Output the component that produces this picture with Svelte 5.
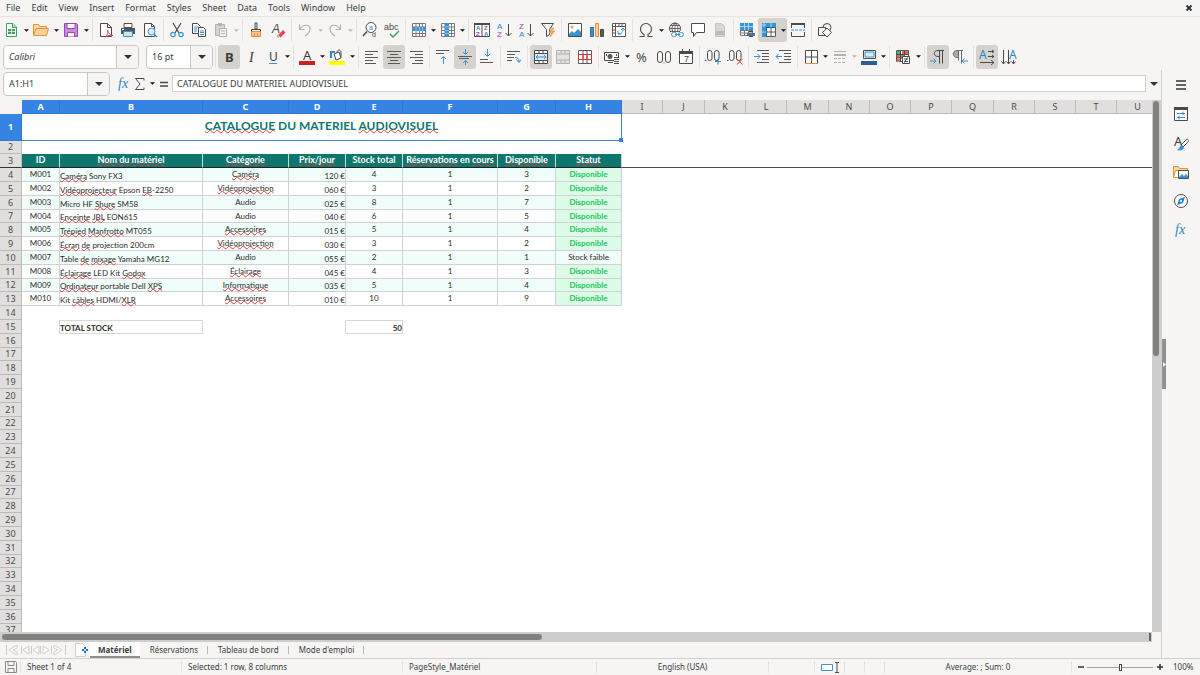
<script lang="ts">
    type Tool = { icon: string; label: string; caret?: boolean; active?: boolean; off?: boolean };
    type Group = { compact?: boolean; tools: Tool[] };

    const menus = ["File", "Edit", "View", "Insert", "Format", "Styles", "Sheet", "Data", "Tools", "Window", "Help"];

    const k = 'fill="none" stroke="#4a4a4a"';
    const g = 'fill="none" stroke="#b4b2b0"';
    const b = 'fill="none" stroke="#3a93d4"';
    const letter = 'font-family="Noto Sans, sans-serif"';
    const small = 'font-family="Liberation Sans, sans-serif"';
    const hLines = (col: string, rows: [number, number, number][]) =>
        rows.map(([y, x1, x2]) => `<path d="M${x1} ${y}.5H${x2}" fill="none" stroke="${col}"/>`).join("");
    const tableGrid = '<path d="M1.500 1.500h13v13h-13zM1.500 5h13M1.500 8.500h13M1.500 11.500h13M5 1.500v13M8.500 1.500v13M11.500 1.500v13"';

    const icons: Record<string, string> = {
        new: `<path d="M3.500 1.500h6.500l3.500 3.500v9.500h-10z" fill="#fff" stroke="#3ba35a"/><path d="M9.500 1.500v4h4" fill="#b7e0c2" stroke="#3ba35a"/><path d="M5 7h7v5H5z" fill="#3ba35a"/><path d="M5 9.500h7M8.500 7v5" stroke="#fff" stroke-width=".7"/>`,
        open: `<path d="M.500 13.500v-11h5l1.500 2h6.500v2" fill="#fbd9a0" stroke="#e69138"/><path d="M.500 13.500L3 6.500h12.500l-2 7z" fill="#fbd39a" stroke="#e69138"/>`,
        save: `<path d="M1.500 1.500h12l1 1v12h-13z" fill="#c98ad8" stroke="#9a45b3"/><path d="M4 1.500h8v5H4z" fill="#fff" stroke="#9a45b3"/><path d="M4.500 14.500v-4h7v4" fill="#fff" stroke="#9a45b3"/>`,
        pdf: `<path d="M2.500 1.500h7l4 4v9h-11z" fill="#fff" stroke="#4a4a4a"/><path d="M9.500 1.500v4h4" ${k}/><path d="M7 15c3-2 3-5 2.500-7 1 4 3 5 5.500 5.500-3-.5-5 0-8 1.500z" fill="none" stroke="#df4358"/>`,
        print: `<path d="M4 1.500h8v4H4z" fill="#fff" stroke="#4a4a4a"/><path d="M1 6h14v6H1z" fill="#555"/><path d="M3.500 9.500h9v5h-9z" fill="#cfe6f7" stroke="#3a93d4"/><path d="M2 7.500h2" stroke="#fff"/>`,
        preview: `<path d="M2.500 1.500h7l3 3v10h-10z" fill="#fff" stroke="#4a4a4a"/><path d="M9.500 1.500v3h3" ${k}/><circle cx="9.500" cy="9.500" r="3.500" fill="#d8ecfa" stroke="#3a93d4"/><path d="M12 12l3 3" stroke="#3a93d4" stroke-width="1.500"/>`,
        cut: `<path d="M4 1l6 10M12 1L6 11" ${k} stroke-width="1.200"/><circle cx="4" cy="12.500" r="2.200" ${b} stroke-width="1.200"/><circle cx="12" cy="12.500" r="2.200" ${b} stroke-width="1.200"/>`,
        copy: `<path d="M1.500 1.500h5l3 3v7h-8z" fill="#fff" stroke="#4a4a4a"/><path d="M3 5h4M3 7h3M3 9h3" ${b}/><path d="M7.500 5.500h5l2 2v7h-7z" fill="#fff" stroke="#4a4a4a"/><path d="M9 9h4M9 10.500h4M9 12.500h4" ${b}/>`,
        paste: `<path d="M2.500 2.500h9v11h-9z" fill="#d5d3d1" stroke="#b4b2b0"/><path d="M5 1h4v3H5z" fill="#b4b2b0"/><path d="M6.500 6.500h7v8h-7z" fill="#f3f2f1" stroke="#b4b2b0"/><path d="M8 9h4M8 11.500h4" ${g}/>`,
        clone: `<path d="M7 1h2v6H7z" fill="#eee" stroke="#4a4a4a"/><path d="M3.500 7.500h9v2h-9z" fill="#fff" stroke="#4a4a4a"/><path d="M3.500 9.500h9v5h-9z" fill="#f7c98b" stroke="#e69138"/><path d="M6.500 11v3M9.500 11v3" stroke="#e69138"/>`,
        clear: `<text x="2" y="11" font-size="12" font-style="italic" ${small} fill="#4a4a4a">A</text><path d="M8 13l5-5 2.500 2.500-5 5z" fill="#e5485d"/><path d="M7 13.500l2 2" stroke="#f5a5b0" stroke-width="2"/>`,
        undo: `<path d="M2.500 2.500v5h5M3 7c3-5 10-5 10 0 0 3-2 5-5 7" ${g} stroke-width="1.200"/>`,
        redo: `<path d="M13.500 2.500v5h-5M13 7C10 2 3 2 3 7c0 3 2 5 5 7" ${g} stroke-width="1.200"/>`,
        find: `<circle cx="9" cy="5.500" r="5" fill="#fff" stroke="#4a4a4a"/><path d="M5 9.500L1 14" ${k} stroke-width="1.500"/><text x="7" y="8" font-size="7" ${small} fill="#2b86cc">a</text><text x="10" y="15" font-size="7" ${small} fill="#4a4a4a">d</text>`,
        spell: `<text x="0" y="8" font-size="9" ${small} fill="#4a4a4a">abc</text><path d="M6 12l3 3 6-6" fill="none" stroke="#35a15c" stroke-width="1.400"/>`,
        row: `${tableGrid} fill="#fff" stroke="#777"/><path d="M1 5h14v4H1z" fill="#3a93d4"/><path d="M5 5v4M8.500 5v4M11.500 5v4" stroke="#8cc4ec"/>`,
        col: `${tableGrid} fill="#fff" stroke="#777"/><path d="M5 1h4v14H5z" fill="#3a93d4"/><path d="M5 5h4M5 8.500h4M5 11.500h4" stroke="#8cc4ec"/>`,
        sort: `<path d="M.500 1.500h15v13H.500zM8 2v12" fill="#fff" stroke="#4a4a4a"/><path d="M0 1h16v2H0z" fill="#4a4a4a"/><g font-size="6" font-weight="700" ${small}><text x="2" y="8" fill="#2b86cc">A</text><text x="2" y="14" fill="#a33bb5">Z</text><text x="10" y="8" fill="#a33bb5">Z</text><text x="10" y="14" fill="#2b86cc">A</text></g>`,
        asc: `<g font-size="8" ${small}><text x="1" y="7" fill="#2b86cc">A</text><text x="1" y="15" fill="#a33bb5">Z</text></g><path d="M12.500 2v12M9.500 11l3 3 3-3" ${k}/>`,
        desc: `<g font-size="8" ${small}><text x="1" y="7" fill="#a33bb5">Z</text><text x="1" y="15" fill="#2b86cc">A</text></g><path d="M12.500 2v12M9.500 11l3 3 3-3" ${k}/>`,
        filter: `<path d="M1.500 1.500h12l-4 6v5l-3 2v-7z" fill="#fff" stroke="#4a4a4a"/><path d="M12 6l-3 5h2.500L10 15l5-6h-3l2-3z" fill="#f3a947" stroke="#e69138" stroke-width=".5"/>`,
        image: `<path d="M1.500 1.500h13v13h-13z" fill="#fff" stroke="#4a4a4a"/><path d="M2 14v-2l3-3 2 2 4-4 3 3v4z" fill="#3a93d4"/><circle cx="5" cy="5" r="1.500" fill="#f3a947"/>`,
        chart: `<path d="M1.500 5.500h3v9h-3z" fill="#3a93d4" stroke="#2b6fae"/><path d="M6.500 1.500h3v13h-3z" fill="#fbd39a" stroke="#e69138"/><path d="M11.500 7.500h3v7h-3z" fill="#5a5a5a" stroke="#4a4a4a"/>`,
        pivot: `<path d="M1.500 1.500h13v13h-13zM1.500 4.500h13M4.500 1.500v13M8 1.500v3M11 1.500v3M1.500 8h3M1.500 11h3" fill="#fff" stroke="#5a5a5a"/><path d="M7 9v3h3M7 12c4 0 5-2 5-5M10 8l2-2 2 2" ${b}/>`,
        omega: `<path d="M1.500 14.500H6v-2C3.500 11 2.500 9 2.500 7a5.500 5.500 0 0 1 11 0c0 2-1 4-3.500 5.500v2h4.500" ${k} stroke-width="1.100"/>`,
        link: `<circle cx="7" cy="6.500" r="5.500" fill="#fff" stroke="#4a4a4a"/><path d="M1.500 6.500h11M7 1v11M7 1c-4 3-4 8 0 11M7 1c4 3 4 8 0 11M2.500 3.500h9M2.500 9.500h9" ${k} stroke-width=".8"/><path d="M3 10h13v5H3z" fill="#f6f5f4"/><rect x="3.500" y="10.500" width="5" height="4" rx="2" ${b}/><rect x="10.500" y="10.500" width="5" height="4" rx="2" ${b}/><path d="M7 12.500h5" ${b}/>`,
        comment: `<path d="M1.500 1.500h13v9h-8l-3 4v-4h-2z" fill="#fff" stroke="#4a4a4a"/>`,
        page: `<path d="M3.500 1.500h6l3 3v10h-9z" fill="#d9d7d5" stroke="#c4c2c0"/><path d="M4 9h8v4H4z" fill="#bdbbb9"/>`,
        header: `<path d="M1.500 1.500h12v12h-12zM1.500 8.500h12M5.500 8v5M9.500 8v5M1.500 11h12" fill="#fff" stroke="#777"/><path d="M1 1h13v7H1z" fill="#3a93d4"/><path d="M1 4.500h13M5.500 1v7M9.500 1v7" stroke="#a9d3f2"/><path d="M8 11h8v3H8z" fill="#5a6f86"/><path d="M10 9.500h4M10 14.500h4" stroke="#4a4a4a"/>`,
        freeze: `<path d="M1.500 1.500h13v13h-13zM10 1.500v13M1.500 10h13" fill="#fff" stroke="#5a5a5a"/><path d="M1 1h14v4H1zM1 1h4v14H1z" fill="#3a93d4"/><path d="M5.500 5v10M5 5.500h10" stroke="#2369a6"/><path d="M1 10h4M10 1v4M1 3h4M3 1v4" stroke="#a9d3f2"/>`,
        split: `<path d="M1.500 6V1.500h13V6M1.500 10v4.500h13V10" fill="none" stroke="#4a4a4a"/><path d="M1 1h14v2H1z" fill="#4a4a4a"/><path d="M1 8h14" stroke="#3a93d4" stroke-dasharray="3 1"/>`,
        shapes: `<circle cx="10" cy="5.500" r="4" ${k}/><path d="M1.500 5.500h7v8h-7z" fill="#f6f5f4" stroke="#4a4a4a"/><path d="M10 6l4.500 4.500L10 15 5.500 10.500z" fill="#f6f5f4" stroke="#4a4a4a"/>`,
        bold: `<text x="4" y="13" font-size="13" font-weight="700" ${letter} fill="#3a3a3a">B</text>`,
        italic: `<text x="6" y="13" font-size="14" font-style="italic" font-family="Liberation Serif, serif" fill="#3a3a3a">I</text>`,
        underline: `<text x="4" y="12" font-size="12" ${letter} fill="#3a3a3a">U</text><path d="M4 14.500h8" ${b}/>`,
        color: `<text x="4" y="11" font-size="13" ${letter} fill="#3a3a3a">A</text><path d="M0 12h16v4H0z" fill="#c9211e"/>`,
        highlight: `<path d="M0 12h16v4H0z" fill="#ffff00"/><path d="M5 5l5-2 2 6-5 2z" fill="#fff" stroke="#4a4a4a"/><path d="M8 4c0-4 4-4 4 0v4" ${k}/><path d="M2 9V3h4" fill="none" stroke="#2b86cc" stroke-width="2"/>`,
        left: hLines("#5a5a5a", [[2, 1, 14], [5, 1, 9], [8, 1, 14], [11, 1, 9], [14, 1, 12]]),
        center: hLines("#5a5a5a", [[2, 1, 15], [5, 4, 12], [8, 1, 15], [11, 4, 12], [14, 2, 14]]),
        right: hLines("#5a5a5a", [[2, 2, 15], [5, 7, 15], [8, 2, 15], [11, 7, 15], [14, 4, 15]]),
        top: hLines("#5a5a5a", [[1, 1, 14], [4, 1, 9]]) + `<path d="M8.500 15V8M6 10l2.500-2.500L11 10" ${b}/>`,
        middle: hLines("#5a5a5a", [[7, 1, 15], [9, 2, 12]]) + `<path d="M8.500 0v5M6 3l2.500 2.500L11 3M8.500 16v-5M6 14l2.500-2.500L11 14" ${b}/>`,
        bottom: hLines("#5a5a5a", [[10, 1, 9], [13, 1, 14]]) + `<path d="M8.500 0v7M6 5l2.500 2.500L11 5" ${b}/>`,
        wrap: hLines("#5a5a5a", [[2, 1, 14], [5, 1, 9], [8, 1, 8], [11, 1, 6]]) + `<path d="M9 8.500c3 0 4 1 4 4M10.500 10.500l2.500 3 2-3" ${b}/>`,
        merge: `<path d="M1.500 1.500h13v13h-13zM1.500 4.500h13M1.500 11.500h13M6 1.500v3M10 1.500v3M6 11.500v3M10 11.500v3" fill="#fff" stroke="#4a4a4a"/><path d="M2 5h12v6H2z" fill="#d8ecfa"/><path d="M3 8h10M5 6L3 8l2 2M11 6l2 2-2 2" ${b}/>`,
        mergeCells: `<path d="M1.500 1.500h13v13h-13zM1.500 5h13M1.500 11h13M6 1.500V5M10 1.500V5M6 11v3.500M10 11v3.500" fill="#e5e3e1" stroke="#b4b2b0"/>`,
        unmerge: `<path d="M1.500 1.500h13v13h-13zM6 1.500v13M10 1.500v13" fill="#fff" stroke="#5a5a5a"/><path d="M1.500 5.500h13v5h-13zM6 5.500v5M10 5.500v5" fill="none" stroke="#d33"/>`,
        currency: `<path d="M.500 3.500h14v8H.500z" fill="#fff" stroke="#4a4a4a"/><circle cx="6" cy="7.500" r="2.500" fill="#5a5a5a"/><path d="M2.500 5v2M12.500 5v2" stroke="#4a4a4a"/><path d="M4 11h5v4H4zM10 8h5v7h-5z" fill="#f6f5f4"/><path d="M4 11.500h5M4 13.500h5M10 8.500h5M10 10.500h5M10 12.500h5M10 14.500h5" ${k}/>`,
        percent: `<text x="2" y="13" font-size="13" ${letter} fill="#4a4a4a">%</text>`,
        number: `<g ${k}><rect x="1.500" y="2.500" width="5" height="11" rx="2.500"/><rect x="9.500" y="2.500" width="5" height="11" rx="2.500"/></g><path d="M7.500 14h1" stroke="#4a4a4a"/>`,
        date: `<path d="M1.500 2.500h13v12h-13z" fill="#fff" stroke="#4a4a4a"/><path d="M1 2h14v3H1zM4 0h1v2H4zM11 0h1v2h-1z" fill="#4a4a4a"/><text x="6" y="13" font-size="9" ${small} fill="#3a3a3a">7</text>`,
        addDec: `<path d="M0 11.500h1.500" stroke="#4a4a4a"/><g ${k}><rect x="2.500" y="1.500" width="4.500" height="10" rx="2.200"/><rect x="9.500" y="1.500" width="4.500" height="10" rx="2.200"/></g><path d="M10 12.500h6M13 9.500v6" stroke="#2b86cc"/>`,
        delDec: `<path d="M0 11.500h1.500" stroke="#4a4a4a"/><g ${k}><rect x="2.500" y="1.500" width="4.500" height="10" rx="2.200"/><rect x="9.500" y="1.500" width="4.500" height="10" rx="2.200"/></g><path d="M10 10l5.500 5.500M15.500 10L10 15.500" stroke="#e03a3a"/>`,
        indent: hLines("#5a5a5a", [[1, 3, 15], [4, 8, 15], [7, 8, 15], [10, 8, 15], [13, 3, 15]]) + `<path d="M0 7.500h6M3.500 5L6 7.500 3.500 10" ${b}/>`,
        outdent: hLines("#5a5a5a", [[1, 3, 15], [4, 8, 15], [7, 8, 15], [10, 8, 15], [13, 3, 15]]) + `<path d="M0 7.500h6M2.500 5L0 7.500 2.500 10" ${b}/>`,
        borders: `<path d="M2.500 14V1.500h12V14M8.500 1.500V14M2.500 8h12" fill="#fff" stroke="#4a4a4a"/><path d="M2 14.500h13" stroke="#e69138"/>`,
        lines: `<path d="M2 2.500h12" ${g}/><path d="M2 6h12" ${g} stroke-width="2"/><path d="M2 9.500h12M2 13.500h12" ${g} stroke-dasharray="3 1"/>`,
        lineColor: `<path d="M2.500 1.500h12v8h-12z" fill="#fff" stroke="#4a4a4a"/><path d="M4 3h9v5H4z" fill="#d8ecfa" stroke="#3a93d4"/><path d="M0 12h16v4H0z" fill="#2a6099"/>`,
        cond: `<path d="M1.500 1.500h12v11h-12z" fill="#fff" stroke="#5a5a5a"/><path d="M2 2h4v3H2zM6 6h4v3H6z" fill="#4cb06c"/><path d="M7 2h6v3H7zM2 6h3v3H2zM2 10h3v3H2z" fill="#e5655f"/><path d="M1.500 5.500h12M1.500 9h12M5.500 1.500v11M9.500 1.500v5" ${k}/><path d="M7.500 7.500h7v7h-7z" fill="#fff" stroke="#4a4a4a"/><path d="M9 10h4M9 12.500h4M12.500 8.500l-3 5" ${k}/>`,
        ltr: `<path d="M14 1.500H8c-5 0-5 6 0 6h1M9.500 1.500v13M12.500 1.500v13" ${k}/><path d="M0 12h6M3.500 9.500L6 12l-2.500 2.500" ${b}/>`,
        rtl: `<path d="M6.500 1.500H5c-5 0-5 7 0 7h1.500z" fill="#aaa" stroke="#777"/><path d="M6 1.500h5M6.500 1.500v10M9.500 1.500v13" fill="none" stroke="#666"/><path d="M10 12h6M12.500 9.500L10 12l2.500 2.500" ${b}/>`,
        dirH: `<text x="0" y="10" font-size="12" ${letter} fill="#2b86cc">A</text><path d="M9 2.500h6M13 1l2 1.500L13 4M9 7.500h6M13 6l2 1.500L13 9M1 13.500h14M12 11l3 2.500L12 16" ${k}/>`,
        dirV: `<path d="M2.500 1v14M.500 12.500l2 2.500 2-2.500M7.500 1v14M5.500 12.500l2 2.500 2-2.500M12.500 11v4M10.500 12.500l2 2.500 2-2.500" ${k}/><text x="8" y="10" font-size="12" ${letter} fill="#2b86cc">A</text>`,
        props: `<path d="M1.500 1.500h13v13h-13z" fill="#fff" stroke="#4a4a4a"/><path d="M1 1h14v3H1z" fill="#4a4a4a"/><path d="M4 7.500h8M4 11.500h8M10 5.500v3.500M6 9.500v4" ${b}/>`,
        styles: `<text x="1" y="11" font-size="13" ${letter} fill="#3a3a3a">A</text><path d="M14 4c2 1 2 2 0 4l-4 4-2-2z" fill="#fff" stroke="#4a4a4a"/><path d="M4 15c3 1 7 0 7-3l-2-2c-3 1-2 4-5 5z" fill="#3a93d4"/>`,
        gallery: `<path d="M.500 13.500v-11h5l1 2h8v3" fill="#fbd9a0" stroke="#e69138"/><path d="M.500 13.500l2-7h4v7z" fill="#fff" stroke="#e69138"/><path d="M5.500 6.500h10v8h-10z" fill="#fff" stroke="#4a4a4a"/><path d="M6 14v-1l3-3 2 2 2-2 2 2v2z" fill="#3a93d4"/>`,
        navigator: `<circle cx="8" cy="8" r="6.500" fill="#fff" stroke="#4a4a4a"/><path d="M12 4l-2 6-6 2 2-6z" fill="#2b86cc"/><circle cx="8" cy="8" r="1" fill="#fff"/>`,
        fx: `<text x="2" y="12" font-size="14" font-style="italic" font-family="Liberation Serif, serif" fill="#2b86cc">fx</text>`,
        sigma: `<path d="M12 4.500V2.500H3.500L8 8l-4.500 5.500H12v-2" ${k}/>`,
        equals: `<path d="M4 6.500h8M4 10h8" ${k} stroke-width="1.500"/>`,
        menu: `<path d="M3 4h10M3 8h10M3 12h10" stroke="#2e3436" stroke-width="1.500"/>`,
        saved: `<path d="M2.500 2.500h10l1 1v10h-11z" fill="none" stroke="#8a8a8a"/><path d="M5 2.500h6v4H5zM5 13.500v-4h6v4" fill="none" stroke="#8a8a8a"/>`,
        addSheet: `<path d="M1.500 1.500h7l3 3v10h-10z" fill="#fff" stroke="#d0cecc"/><path d="M11 5v6M8 8h6" stroke="#2a6fb5" stroke-width="2"/><circle cx="11" cy="8" r="1" fill="#fff"/>`,
    };

    const standard: Group[] = [
        { tools: [{ icon: "new", label: "New", caret: true }, { icon: "open", label: "Open", caret: true }, { icon: "save", label: "Save", caret: true }] },
        { tools: [{ icon: "pdf", label: "Export as PDF" }, { icon: "print", label: "Print" }, { icon: "preview", label: "Print Preview" }] },
        { tools: [{ icon: "cut", label: "Cut" }, { icon: "copy", label: "Copy" }, { icon: "paste", label: "Paste", caret: true, off: true }] },
        { tools: [{ icon: "clone", label: "Clone Formatting" }, { icon: "clear", label: "Clear Formatting" }] },
        { tools: [{ icon: "undo", label: "Undo", caret: true, off: true }, { icon: "redo", label: "Redo", caret: true, off: true }] },
        { tools: [{ icon: "find", label: "Find and Replace" }, { icon: "spell", label: "Spelling" }] },
        { compact: true, tools: [{ icon: "row", label: "Row", caret: true }, { icon: "col", label: "Column", caret: true }] },
        { tools: [{ icon: "sort", label: "Sort" }, { icon: "asc", label: "Sort Ascending" }, { icon: "desc", label: "Sort Descending" }, { icon: "filter", label: "AutoFilter" }] },
        { tools: [{ icon: "image", label: "Insert Image" }, { icon: "chart", label: "Insert Chart" }, { icon: "pivot", label: "Pivot Table" }] },
        { tools: [{ icon: "omega", label: "Special Character", caret: true }, { icon: "link", label: "Hyperlink" }, { icon: "comment", label: "Comment" }, { icon: "page", label: "Headers and Footers", off: true }] },
        { compact: true, tools: [{ icon: "header", label: "Define Print Area" }, { icon: "freeze", label: "Freeze Panes", caret: true, active: true }, { icon: "split", label: "Split Window" }] },
        { tools: [{ icon: "shapes", label: "Draw Functions" }] },
    ];

    const formatting: Group[] = [
        { compact: true, tools: [{ icon: "bold", label: "Bold", active: true }, { icon: "italic", label: "Italic" }, { icon: "underline", label: "Underline", caret: true }] },
        { tools: [{ icon: "color", label: "Font Color", caret: true }, { icon: "highlight", label: "Highlighting", caret: true }] },
        { tools: [{ icon: "left", label: "Align Left" }, { icon: "center", label: "Center", active: true }, { icon: "right", label: "Align Right" }] },
        { tools: [{ icon: "top", label: "Align Top" }, { icon: "middle", label: "Center Vertically", active: true }, { icon: "bottom", label: "Align Bottom" }] },
        { tools: [{ icon: "wrap", label: "Wrap Text" }] },
        { tools: [{ icon: "merge", label: "Merge and Center", active: true }, { icon: "mergeCells", label: "Merge Cells", off: true }, { icon: "unmerge", label: "Unmerge Cells" }] },
        { tools: [{ icon: "currency", label: "Currency", caret: true }, { icon: "percent", label: "Percent" }, { icon: "number", label: "Number" }, { icon: "date", label: "Date" }] },
        { tools: [{ icon: "addDec", label: "Add Decimal Place" }, { icon: "delDec", label: "Delete Decimal Place" }] },
        { tools: [{ icon: "indent", label: "Increase Indent" }, { icon: "outdent", label: "Decrease Indent" }] },
        { compact: true, tools: [{ icon: "borders", label: "Borders", caret: true }, { icon: "lines", label: "Border Style", caret: true, off: true }, { icon: "lineColor", label: "Border Color", caret: true }] },
        { tools: [{ icon: "cond", label: "Conditional Formatting", caret: true }] },
        { tools: [{ icon: "ltr", label: "Left-To-Right", active: true }, { icon: "rtl", label: "Right-To-Left" }] },
        { tools: [{ icon: "dirH", label: "Horizontal Text", active: true }, { icon: "dirV", label: "Vertical Text" }] },
    ];

    const sidebar = [
        { icon: "menu", label: "Sidebar Settings" },
        { icon: "props", label: "Properties" },
        { icon: "styles", label: "Styles" },
        { icon: "gallery", label: "Gallery" },
        { icon: "navigator", label: "Navigator" },
        { icon: "fx", label: "Functions" },
    ];

    const widths = [38, 143, 86, 57, 57, 95, 58, 66, 41, 42, 41, 41, 42, 41, 41, 41, 42, 41, 41, 41, 42];
    const columns = widths.map((width, i) => ({ name: String.fromCharCode(65 + i), width }));

    // words between underscores are flagged by the spell checker
    const title = "_CATALOGUE_ DU MATERIEL _AUDIOVISUEL_";
    const headings = ["ID", "_Nom du matériel_", "_Catégorie_", "_Prix/jour_", "Stock total", "_Réservations_ en _cours_", "_Disponible_", "_Statut_"];
    const items = [
        ["M001", "_Caméra_ Sony FX3", "_Caméra_", "120 €", "4", "1", "3", "Disponible"],
        ["M002", "_Vidéoprojecteur_ Epson _EB_-2250", "_Vidéoprojection_", "060 €", "3", "1", "2", "Disponible"],
        ["M003", "Micro HF _Shure_ SM58", "Audio", "025 €", "8", "1", "7", "Disponible"],
        ["M004", "_Enceinte_ _JBL_ EON615", "Audio", "040 €", "6", "1", "5", "Disponible"],
        ["M005", "_Trépied_ _Manfrotto_ MT055", "_Accessoires_", "015 €", "5", "1", "4", "Disponible"],
        ["M006", "_Écran_ _de_ projection 200cm", "_Vidéoprojection_", "030 €", "3", "1", "2", "Disponible"],
        ["M007", "Table _de_ _mixage_ Yamaha MG12", "Audio", "055 €", "2", "1", "1", "Stock faible"],
        ["M008", "_Éclairage_ LED Kit _Godox_", "_Éclairage_", "045 €", "4", "1", "3", "Disponible"],
        ["M009", "_Ordinateur_ portable Dell _XPS_", "_Informatique_", "035 €", "5", "1", "4", "Disponible"],
        ["M010", "Kit _câbles_ HDMI/_XLR_", "_Accessoires_", "010 €", "10", "1", "9", "Disponible"],
    ];
    const lastRows = Array.from({ length: 22 }, (_, i) => i + 16);

    let sheets = ["Matériel", "Réservations", "Tableau de bord", "Mode d'emploi"];
    let current = $state("Matériel");
    let formula = $state("CATALOGUE DU MATERIEL AUDIOVISUEL");
    let zoom = $state(100);
</script>

{#snippet icon(name: string)}
    <svg class="icon" viewBox="0 0 16 16" aria-hidden="true">{@html icons[name]}</svg>
{/snippet}

{#snippet arrow()}
    <svg class="arrow" viewBox="0 0 8 4" aria-hidden="true"><path d="M0 0h8L4 4z" fill="currentColor" /></svg>
{/snippet}

{#snippet toolGroups(groups: Group[])}
    {#each groups as group, i}
        {#if i > 0}<span class="sep"></span>{/if}
        <div class="group" class:compact={group.compact}>
            {#each group.tools as tool}
                <span class="tool" class:active={tool.active} class:off={tool.off}>
                    <button class="tool-button" aria-label={tool.label}>{@render icon(tool.icon)}</button>
                    {#if tool.caret}
                        <button class="tool-caret" aria-label={`${tool.label} options`}>{@render arrow()}</button>
                    {/if}
                </span>
            {/each}
        </div>
    {/each}
{/snippet}

{#snippet spelled(text: string)}
    {#each text.split("_") as part, i}{#if i % 2}<span class="typo">{part}</span>{:else}{part}{/if}{/each}
{/snippet}

<div class="app">
    <nav class="menubar">
        {#each menus as menu}
            <button>{menu}</button>
        {/each}
        <button class="close" aria-label="Close document">
            <svg viewBox="0 0 8 8" aria-hidden="true"><path d="M1.500 1.500l5 5M6.500 1.500l-5 5" stroke="#2e3436" stroke-width="1.800" /></svg>
        </button>
    </nav>

    <div class="toolbar">{@render toolGroups(standard)}</div>

    <div class="toolbar">
        <div class="combo font-name">
            <input value="Calibri" aria-label="Font name" />
            <button aria-label="Choose font">{@render arrow()}</button>
        </div>
        <div class="combo font-size">
            <input value="16 pt" aria-label="Font size" />
            <button aria-label="Choose font size">{@render arrow()}</button>
        </div>
        <span class="sep"></span>
        {@render toolGroups(formatting)}
    </div>

    <div class="workspace">
        <main>
            <div class="formula-bar">
                <div class="combo name-box">
                    <input value="A1:H1" aria-label="Name box" />
                    <button aria-label="Choose range">{@render arrow()}</button>
                </div>
                <button class="formula-button" aria-label="Function wizard">{@render icon("fx")}</button>
                <button class="formula-button" aria-label="Select function">{@render icon("sigma")}</button>
                <button class="tool-caret" aria-label="Function list">{@render arrow()}</button>
                <button class="formula-button" aria-label="Formula">{@render icon("equals")}</button>
                <input class="formula" bind:value={formula} aria-label="Input line" />
                <button class="expand" aria-label="Expand formula bar">{@render arrow()}</button>
            </div>

            <div class="sheet-area">
                <div class="sheet">
                    <table>
                        <colgroup>
                            <col style:width="22px" />
                            {#each columns as column}
                                <col style:width={`${column.width}px`} />
                            {/each}
                        </colgroup>
                        <thead>
                            <tr>
                                <td class="corner"></td>
                                {#each columns as column, i}
                                    <th scope="col" class:selected={i < 8}>{column.name}</th>
                                {/each}
                            </tr>
                        </thead>
                        <tbody>
                            <tr class="title-row">
                                <th scope="row" class="selected">1</th>
                                <td class="title" colspan="8">{@render spelled(title)}<span class="handle"></span></td>
                            </tr>
                            <tr><th scope="row">2</th></tr>
                            <tr class="headings">
                                <th scope="row">3</th>
                                {#each headings as heading}
                                    <td>{@render spelled(heading)}</td>
                                {/each}
                                <td class="rest" colspan="13"></td>
                            </tr>
                            {#each items as item, row}
                                <tr class="item" class:even={row % 2 === 0}>
                                    <th scope="row">{row + 4}</th>
                                    {#each item as value, i}
                                        <td class:name={i === 1} class:price={i === 3} class:available={value === "Disponible"}>{@render spelled(value)}</td>
                                    {/each}
                                </tr>
                            {/each}
                            <tr><th scope="row">14</th></tr>
                            <tr class="total">
                                <th scope="row">15</th>
                                <td></td>
                                <td class="boxed">TOTAL STOCK</td>
                                <td></td>
                                <td></td>
                                <td class="boxed sum">50</td>
                            </tr>
                            {#each lastRows as n}
                                <tr><th scope="row">{n}</th></tr>
                            {/each}
                        </tbody>
                    </table>
                </div>
                <div class="vscroll"><div class="thumb"></div></div>
            </div>
            <div class="hscroll"><div class="thumb"></div><span class="grip"></span></div>

            <div class="tabs">
                <button class="sheet-nav" aria-label="Scroll sheets">
                    <svg viewBox="0 0 62 12" aria-hidden="true">
                        <path d="M1.500 1v10M12 1L4 6l8 5V8L8 6l4-2zM24 2l-6 4 6 4zM16.500 2v8M34 2l-6 4 6 4zM26.500 2v8M38 2l6 4-6 4zM35.500 2v8M46.500 2v8M49 1l8 5-8 5V8l4-2-4-2zM60.500 1v10" fill="#fff" stroke="#cfcdcb" />
                    </svg>
                </button>
                <button class="add-sheet" aria-label="Add sheet">{@render icon("addSheet")}</button>
                {#each sheets as sheet}
                    <button class="tab" class:current={sheet === current} onclick={() => (current = sheet)}>{sheet}</button>
                {/each}
            </div>
        </main>

        <aside>
            <button class="collapse" aria-label="Hide sidebar">
                <svg viewBox="0 0 4 6" aria-hidden="true"><path d="M0 0l4 3-4 3z" fill="#fff" /></svg>
            </button>
            {#each sidebar as deck}
                <button class="deck" aria-label={deck.label}>{@render icon(deck.icon)}</button>
            {/each}
        </aside>
    </div>

    <footer>
        <div class="save-state">{@render icon("saved")}</div>
        <div>Sheet 1 of 4</div>
        <div>Selected: 1 row, 8 columns</div>
        <div>PageStyle_Matériel</div>
        <div class="middle">English (USA)</div>
        <div></div>
        <div class="middle mode">
            <svg viewBox="0 0 20 12" aria-hidden="true">
                <path d="M1.500 3.500h11v6h-11z" fill="#fff" stroke="#3a93d4" />
                <path d="M15 1.500h4M15 11.500h4M17 1.500v10" stroke="#4a4a4a" fill="none" />
            </svg>
        </div>
        <div></div>
        <div></div>
        <div class="middle">Average: ; Sum: 0</div>
        <div class="zoom">
            <button aria-label="Zoom out" onclick={() => (zoom -= 5)}><svg viewBox="0 0 8 8" aria-hidden="true"><path d="M1 4h6" stroke="#2e3436" stroke-width="1.500" /></svg></button>
            <input type="range" min="0" max="200" bind:value={zoom} aria-label="Zoom" />
            <button aria-label="Zoom in" onclick={() => (zoom += 5)}><svg viewBox="0 0 8 8" aria-hidden="true"><path d="M1 4h6M4 1v6" stroke="#2e3436" stroke-width="1.500" /></svg></button>
            <span>{zoom}%</span>
        </div>
    </footer>
</div>

<style>
    :global(body) {
        margin: 0;
        overflow: hidden;
    }

    .app {
        display: flex;
        flex-direction: column;
        height: 100vh;
        background: #f6f5f4;
        color: #3a3d3e;
        font: 8px/12px "Noto Sans", sans-serif;
    }

    button,
    input {
        margin: 0;
        padding: 0;
        border: 0;
        background: none;
        color: inherit;
        font: inherit;
    }

    svg {
        display: block;
        overflow: visible;
    }

    .icon {
        width: 16px;
        height: 16px;
        flex: none;
    }

    .arrow {
        width: 5px;
        height: 3px;
        color: #111;
    }

    .menubar {
        display: flex;
        align-items: center;
        gap: 11px;
        height: 16px;
        padding-left: 6px;
        border-bottom: 1px solid #e6e4e2;
        font-size: 9px;
    }

    .close {
        margin-left: auto;
        padding-right: 7px;
    }

    .close svg {
        width: 8px;
        height: 8px;
    }

    .toolbar {
        display: flex;
        align-items: center;
        height: 26px;
    }

    .toolbar + .toolbar {
        height: 27px;
    }

    .group,
    .tool {
        display: flex;
    }

    .tool {
        border-radius: 3px;
    }

    .tool.active {
        background: #d5d1cd;
    }

    .tool-button {
        display: grid;
        place-items: center;
        width: 22px;
        height: 24px;
    }

    .tool-caret {
        display: grid;
        place-items: center;
        width: 8px;
    }

    .compact .tool-caret {
        width: 7px;
    }

    .off .arrow {
        color: #b9b7b5;
    }

    .sep {
        width: 1px;
        height: 22px;
        margin: 0 2px;
        background: #e4e2e0;
    }

    .combo {
        display: flex;
        box-sizing: border-box;
        height: 24px;
        border: 1px solid #cdc7c2;
        border-radius: 4px;
        background: #fff;
        overflow: hidden;
        font-size: 9px;
    }

    .combo input {
        flex: 1;
        min-width: 0;
        padding-left: 5px;
    }

    .combo button {
        display: grid;
        place-items: center;
        width: 22px;
        border-left: 1px solid #cdc7c2;
        background: #f6f5f4;
    }

    .combo .arrow,
    .expand .arrow {
        width: 8px;
        height: 4px;
        color: #2e3436;
    }

    .font-name {
        width: 136px;
        margin: 0 7px 0 3px;
        font-style: italic;
    }

    .font-size {
        width: 67px;
    }

    .workspace {
        display: flex;
        flex: 1;
        min-height: 0;
    }

    main {
        display: flex;
        flex-direction: column;
        flex: 1;
        min-width: 0;
    }

    .formula-bar {
        display: flex;
        align-items: center;
        height: 27px;
        padding-bottom: 3px;
    }

    .name-box {
        width: 107px;
        margin: 0 6px 0 3px;
    }

    .formula-button {
        display: grid;
        place-items: center;
        width: 16px;
    }

    .formula {
        flex: 1;
        box-sizing: border-box;
        height: 17px;
        padding-left: 4px;
        border: 1px solid #d5d0cc;
        background: #fff;
        font-size: 9px;
    }

    .expand {
        display: grid;
        place-items: center;
        width: 15px;
    }

    .sheet-area {
        display: flex;
        flex: 1;
        min-height: 0;
    }

    .sheet {
        flex: 1;
        min-width: 0;
        overflow: hidden;
        background: #fff;
    }

    table {
        table-layout: fixed;
        width: 1px;
        border-spacing: 0;
        font: 8px/8px Lato, sans-serif;
        color: #2b2b2b;
    }

    th,
    td {
        position: relative;
        box-sizing: border-box;
        padding: 0;
        white-space: nowrap;
    }

    th {
        border: solid #bdbbb9;
        border-width: 0 1px 1px 0;
        background: #e1dfde;
        color: #4a4a4a;
        font: 9px/12px "Noto Sans", sans-serif;
    }

    th.selected {
        border-color: #2f78cf;
        background: #3584e4;
        color: #fff;
        font-weight: 700;
    }

    .corner {
        background: #f6f5f4;
    }

    tr {
        height: 14px;
    }

    tbody tr:nth-child(5n + 2) {
        height: 13px;
    }

    tbody .title-row {
        height: 27px;
    }

    .title {
        padding-bottom: 2px;
        border: solid #3584e4;
        border-width: 0 1px 1px 0;
        color: #0f766e;
        text-align: center;
        font-size: 12px;
        font-weight: 700;
    }

    .handle {
        position: absolute;
        right: -2px;
        bottom: -2px;
        width: 4px;
        height: 4px;
        background: #3584e4;
    }

    .headings td {
        padding-top: 2px;
        border: solid #c4dcda;
        border-width: 0 1px 0 0;
        border-bottom: 1px solid #1d2524;
        background: #0f766e;
        color: #fff;
        text-align: center;
        vertical-align: top;
        font-size: 9px;
        font-weight: 700;
    }

    .headings th {
        border-bottom-color: #333;
    }

    .headings .rest {
        border-right: 0;
        border-bottom-color: #4a4a4a;
        background: none;
    }

    .item td {
        padding-top: 2px;
        border: solid #ccd2d6;
        border-width: 0 1px 1px 0;
        text-align: center;
        vertical-align: top;
    }

    .item .name,
    .item .price {
        padding: 0 0 1px;
        text-align: left;
        vertical-align: bottom;
    }

    .item .price {
        text-align: right;
    }

    .even td {
        background: #f0fdfa;
    }

    .item .available {
        background: #dcfce7;
        color: #22c55e;
        font-weight: 700;
    }

    .total .boxed {
        padding-bottom: 1px;
        border: solid #d5d9dc;
        border-width: 1px 1px 1px 0;
        vertical-align: bottom;
        font-weight: 700;
    }

    .total td:has(+ .boxed) {
        border-right: 1px solid #d5d9dc;
    }

    .total .sum {
        text-align: right;
    }

    .typo {
        text-decoration: underline wavy #e03c3c 1px;
        text-decoration-skip-ink: none;
        text-underline-offset: -1px;
    }

    .vscroll {
        width: 9px;
        background: #cdcdcd;
    }

    .vscroll .thumb {
        width: 6px;
        height: 48%;
        margin: 1px;
        border-radius: 3px;
        background: #80817f;
    }

    .hscroll {
        display: flex;
        align-items: center;
        justify-content: space-between;
        height: 10px;
        margin-right: 9px;
        padding: 0 1px 0 2px;
        background: #cdcdcd;
    }

    .hscroll .thumb {
        width: 47%;
        height: 6px;
        border-radius: 3px;
        background: #80817f;
    }

    .grip {
        width: 2px;
        height: 8px;
        background: #666;
    }

    .tabs {
        display: flex;
        align-items: stretch;
        height: 16px;
    }

    .sheet-nav {
        width: 62px;
        margin: 0 7px 0 5px;
    }

    .sheet-nav svg {
        height: 12px;
    }

    .tab {
        position: relative;
        padding: 0 10px;
    }

    .tab:not(.current)::after {
        content: "";
        position: absolute;
        top: 4px;
        right: 0;
        width: 1px;
        height: 8px;
        background: #bbb9b7;
    }

    .tab.current {
        box-sizing: border-box;
        padding: 2px 8px 0;
        border-bottom: 2px solid #8f8f8d;
        background: #fff;
        font-weight: 700;
    }

    aside {
        position: relative;
        display: flex;
        flex-direction: column;
        gap: 5px;
        width: 38px;
        padding-top: 3px;
        border-left: 1px solid #d5d0cc;
    }

    .deck {
        display: grid;
        place-items: center;
        height: 24px;
    }

    .collapse {
        position: absolute;
        top: 269px;
        left: 0;
        display: grid;
        place-items: center;
        width: 4px;
        height: 50px;
        background: #919190;
    }

    .collapse svg {
        width: 3px;
        height: 5px;
    }

    footer {
        display: grid;
        grid-template-columns: 20px 161fr 221fr 194fr 172fr 46px 30px 20px 20px 187fr 129px;
        align-items: center;
        height: 16px;
        border-top: 1px solid #d5d0cc;
    }

    footer > div {
        min-height: 12px;
        padding-left: 6px;
        border-left: 1px solid #e4e2e0;
    }

    footer .middle {
        padding: 0;
        text-align: center;
    }

    footer .save-state {
        padding: 0 0 0 3px;
        border: 0;
        height: 16px;
    }

    footer .mode svg {
        width: 20px;
        margin-left: 5px;
    }

    footer .zoom {
        display: flex;
        align-items: center;
        padding-left: 5px;
    }

    .zoom svg {
        width: 8px;
        height: 8px;
    }

    .zoom input {
        width: 66px;
        height: 10px;
        margin: 0 3px 0 2px;
        appearance: none;
        background: linear-gradient(#a5a3a1, #a5a3a1) center / 100% 1px no-repeat;
    }

    .zoom input::-webkit-slider-thumb {
        appearance: none;
        box-sizing: border-box;
        width: 3px;
        height: 7px;
        border: 1px solid #4a4a4a;
        background: #f6f5f4;
    }

    .zoom span {
        margin-left: 9px;
    }
</style>
